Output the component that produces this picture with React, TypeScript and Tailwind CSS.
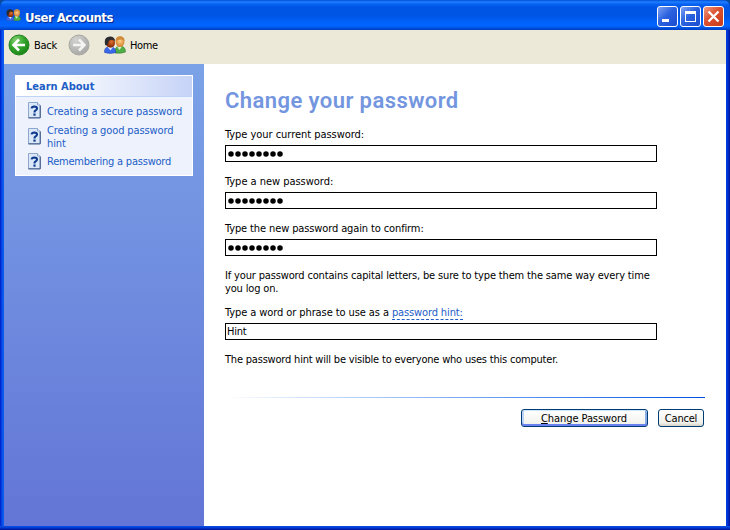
import React from "react";

function Users({ size }: { size: number }) {
  return (
    <svg width={size} height={size * 0.8} viewBox="0 0 22 17.6" className="shrink-0">
      <defs>
        <radialGradient id="faceA" cx="0.6" cy="0.4"><stop offset="0" stopColor="#e07030" /><stop offset="1" stopColor="#8a2e08" /></radialGradient>
        <radialGradient id="faceB" cx="0.5" cy="0.4"><stop offset="0" stopColor="#ffd28a" /><stop offset="1" stopColor="#d98a3a" /></radialGradient>
      </defs>
      <path d="M11 17Q10.500 10.500 15.500 10Q21.500 10 21.500 16Q17 18 11 17Z" fill="#4fae46" stroke="#257022" strokeWidth="0.5" />
      <path d="M13 10.500L15.500 14L18 10.500Z" fill="#d8f0c8" />
      <ellipse cx="16" cy="5.800" rx="4.400" ry="5.200" fill="url(#faceB)" />
      <path d="M11.500 5Q11.500 0.200 16 0.200Q20.500 0.200 20.700 5Q17.500 2.500 14.500 4Z" fill="#d08c3a" />
      <path d="M0.500 16.500Q0 11 5.500 10.500Q11.500 10.500 12 16.500Q6 18.500 0.500 16.500Z" fill="#3a68ea" stroke="#2143a0" strokeWidth="0.5" />
      <path d="M3.500 11L6.500 14.500L9 11Z" fill="#d7e6ff" />
      <ellipse cx="6.500" cy="6.800" rx="4.500" ry="5" fill="url(#faceA)" />
      <path d="M1.200 9Q-0.800 0.800 6 0.500Q10.800 0.500 11 5Q7.500 2.600 4.800 5Q4.200 8.500 2.300 9.800Z" fill="#2c2b30" />
    </svg>
  );
}

function NavArrow({ back }: { back?: boolean }) {
  return (
    <svg width="22" height="22" viewBox="0 0 22 22" className="shrink-0">
      <defs>
        <radialGradient id="navGreen" cx="0.35" cy="0.25" r="0.8"><stop offset="0" stopColor="#82d070" /><stop offset="0.5" stopColor="#35a52d" /><stop offset="1" stopColor="#168414" /></radialGradient>
        <radialGradient id="navGray" cx="0.35" cy="0.25" r="0.8"><stop offset="0" stopColor="#d2d2d0" /><stop offset="1" stopColor="#a6a6a4" /></radialGradient>
      </defs>
      <circle cx="11" cy="11" r="10" fill={back ? "url(#navGreen)" : "url(#navGray)"} stroke={back ? "#238420" : "#a8a8a2"} />
      <path d={back ? "M17 11H6M11 5.500L5.500 11L11 16.500" : "M5 11H16M11 5.500L16.500 11L11 16.500"} fill="none" stroke={back ? "#fff" : "#f4f4f2"} strokeWidth="2.500" />
    </svg>
  );
}

function HelpPage() {
  return (
    <svg width="13" height="17" viewBox="0 0 13 17" className="mb-[1px] shrink-0">
      <path d="M0.500 0.500H9.500L12 3V16H0.500Z" fill="#dbe8fa" stroke="#8fa6cc" />
      <path d="M0.500 15.800H12.300V3.500" fill="none" stroke="#3f5784" />
      <path d="M9.500 0.500V3H12" fill="#fff" stroke="#8fa6cc" />
      <path d="M3.600 6.300Q3.900 4.500 6.300 4.500Q9 4.600 9 6.600Q8.800 7.800 7.300 8.600Q6.500 9.100 6.500 10.500" fill="none" stroke="#0d3a8c" strokeWidth="2.100" />
      <rect x="5.400" y="11.500" width="2.200" height="2.200" fill="#0d3a8c" />
    </svg>
  );
}

const caption = "flex h-[21px] w-[21px] items-center justify-center rounded-[3px] border border-white ";

function Password() {
  return (
    <div className="flex h-[17px] w-[432px] items-center gap-[1px] border border-black bg-white pt-[1px] pl-[2px]">
      {Array.from({ length: 8 }, (_, i) => (
        <svg key={i} width="6" height="6" viewBox="0 0 6 6"><circle cx="3" cy="3" r="2.750" fill="#000" /></svg>
      ))}
    </div>
  );
}

export default function App() {
  return (
    <div className="flex h-[530px] w-[730px] flex-col bg-[#0b4a9a] font-['DejaVu_Sans_Condensed','DejaVu_Sans',sans-serif] text-[11px] leading-[13px] text-black [font-stretch:condensed]">
      <div className="flex h-[530px] flex-col overflow-hidden rounded-t-[7px] bg-[linear-gradient(to_right,#0010c0_0px,#0038dc_1px,#0a5cf0_3px,#0a5cf0_4px,#0040e0_726px,#0030d0_728px,#001090_730px)]">
        <header className="flex h-[30px] shrink-0 items-center bg-[linear-gradient(to_bottom,#0050d8_0px,#2080ff_2px,#0864f4_4px,#0055e5_7px,#0055e5_16px,#0062fa_22px,#0064ff_26px,#0048d0_29px,#003cba_30px)] pr-[6px] pl-[6px]">
          <Users size={15} />
          <h1 className="mt-[4px] ml-[4px] flex-1 text-[13px] font-bold tracking-[-0.5px] whitespace-nowrap text-white [text-shadow:1px_1px_1px_#00248a]">User Accounts</h1>
          <div className="mt-[3px] flex gap-[2px]">
            <div className={caption + "bg-[linear-gradient(135deg,#7da2f5,#2b62df_45%,#1c4bd0)]"}>
              <div className="mt-[8px] mr-[4px] h-[3px] w-[7px] bg-white" />
            </div>
            <div className={caption + "bg-[linear-gradient(135deg,#7da2f5,#2b62df_45%,#1c4bd0)]"}>
              <div className="h-[11px] w-[11px] border border-t-[3px] border-white" />
            </div>
            <div className={caption + "bg-[linear-gradient(135deg,#ee9c82,#dc5030_45%,#c83c18)]"}>
              <svg width="13" height="13" viewBox="0 0 13 13"><path d="M1.500 1.500L11.500 11.500M11.500 1.500L1.500 11.500" stroke="#fff" strokeWidth="2.300" /></svg>
            </div>
          </div>
        </header>
        <nav className="mx-[4px] flex h-[34px] shrink-0 items-center bg-[#ece9d8] pb-[4px] pl-[4px]">
          <NavArrow back />
          <span className="ml-[4px] w-[34px] tracking-[-0.25px]">Back</span>
          <NavArrow />
          <span className="ml-[14px] flex"><Users size={22} /></span>
          <span className="ml-[4px] tracking-[-0.4px]">Home</span>
        </nav>
        <div className="mx-[4px] flex h-[462px] shrink-0 bg-white">
          <aside className="w-[200px] bg-[linear-gradient(to_bottom,#7ba2e7,#6375d6)] pt-[11px] pl-[11px]">
            <section className="h-[101px] w-[178px] border border-white bg-[#eef2fd] text-[#215dc6]">
              <h2 className="flex h-[21px] items-center border-b border-[#bfd3f8] bg-[linear-gradient(to_right,#ffffff_20%,#c6d3f7)] pl-[10px] font-bold">Learn About</h2>
              <div className="flex h-[28px] items-center gap-[6px] pl-[12px]"><HelpPage /><span className="tracking-[-0.08px] whitespace-nowrap">Creating a secure password</span></div>
              <div className="flex h-[24px] items-center gap-[6px] pl-[12px]"><HelpPage /><span className="tracking-[-0.12px] whitespace-nowrap">Creating a good password<br />hint</span></div>
              <div className="flex h-[25px] items-center gap-[6px] pl-[12px]"><HelpPage /><span className="tracking-[-0.22px] whitespace-nowrap">Remembering a password</span></div>
            </section>
          </aside>
          <main className="flex flex-1 flex-col pl-[21px] whitespace-nowrap">
            <h2 className="mt-[23px] h-[26px] font-['Roboto','Liberation_Sans',sans-serif] text-[22px] leading-[27px] font-semibold tracking-[0.43px] text-[#7396df] [font-stretch:normal]">Change your password</h2>
            <label className="mt-[15px] mb-[4px] h-[13px] tracking-[-0.04px]">Type your current password:</label>
            <Password />
            <label className="mt-[13px] mb-[4px] h-[13px] tracking-[-0.03px]">Type a new password:</label>
            <Password />
            <label className="mt-[13px] mb-[4px] h-[13px] tracking-[-0.12px]">Type the new password again to confirm:</label>
            <Password />
            <p className="mt-[13px] h-[26px] tracking-[-0.155px]">If your password contains capital letters, be sure to type them the same way every time<br />you log on.</p>
            <div className="mt-[11px] mb-[4px] h-[13px] tracking-[-0.09px]">Type a word or phrase to use as a <span className="inline-block h-[14px] border-b border-dashed border-[#215dc6] tracking-[-0.13px] text-[#215dc6]">password hint:</span></div>
            <div className="flex h-[17px] w-[432px] items-center border border-black pl-[1px] tracking-[-0.2px]">Hint</div>
            <p className="mt-[13px] h-[13px] tracking-[-0.2px]">The password hint will be visible to everyone who uses this computer.</p>
            <div className="mt-[31px] h-[1px] w-[480px] bg-[linear-gradient(to_right,#ffffff,#5a96f5_60%,#0050e0)]" />
            <div className="mt-[11px] flex w-[479px] justify-end gap-[10px]">
              <button className="h-[18px] w-[127px] rounded-[3px] border border-[#003c74] bg-[linear-gradient(#fff,#f0f0ea)] pr-[1px] leading-[13px] tracking-[-0.07px] shadow-[inset_0_-2px_0_#6982ee,inset_0_1px_0_#cee7ff,inset_2px_0_0_#bcd4f6,inset_-2px_0_0_#89ade4]"><u>C</u>hange Password</button>
              <button className="h-[18px] w-[46px] rounded-[3px] border border-[#003c74] bg-[linear-gradient(#fff,#f0f0ea_80%,#d6d0c5)] leading-[13px] tracking-[-0.2px]">Cancel</button>
            </div>
          </main>
        </div>
        <div className="h-[4px] shrink-0 bg-[linear-gradient(#0a50e8,#0038d0_50%,#001090)]" />
      </div>
    </div>
  );
}
